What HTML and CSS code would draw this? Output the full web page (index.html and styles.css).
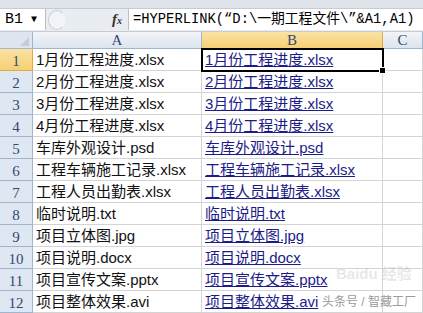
FILE: index.html
```html
<!DOCTYPE html>
<html lang="zh-CN">
<head>
    <meta charset="UTF-8">
    <title>HYPERLINK</title>
    <link rel="stylesheet" href="styles.css">
</head>
<body>

<div id="sheet">
    <div class="ribbon-edge"></div>

    <div class="formula-bar">
        <div class="name-box">B1<span class="arrow">&#9660;</span></div>
        <div class="bar-tools">
            <span class="round-btn"></span>
            <span class="fx"><i>f</i><small>x</small></span>
        </div>
        <div class="formula">=HYPERLINK(“D:\一期工程文件\”&amp;A1,A1)</div>
    </div>

    <div class="grid" id="grid">
        <div class="corner"><span class="tri"></span></div>
        <div class="col-head">A</div>
        <div class="col-head sel">B</div>
        <div class="col-head">C</div>
    </div>

    <div class="watermark">头条号 / 智藏工厂</div>
    <div class="paw">Bai<b>du</b> 经验</div>
</div>

<script>
    const files = [
        "1月份工程进度.xlsx",
        "2月份工程进度.xlsx",
        "3月份工程进度.xlsx",
        "4月份工程进度.xlsx",
        "车库外观设计.psd",
        "工程车辆施工记录.xlsx",
        "工程人员出勤表.xlsx",
        "临时说明.txt",
        "项目立体图.jpg",
        "项目说明.docx",
        "项目宣传文案.pptx",
        "项目整体效果.avi"
    ];

    const grid = document.getElementById('grid');
    files.forEach((name, i) => {
        const row = i + 1;
        grid.insertAdjacentHTML('beforeend',
            '<div class="row-head' + (row === 1 ? ' sel' : '') + '">' + row + '</div>' +
            '<div class="cell">' + name + '</div>' +
            '<div class="cell' + (row === 1 ? ' active' : '') + '"><span class="link">' + name + '</span></div>' +
            '<div class="cell"></div>');
    });
</script>
</body>
</html>
```

FILE: styles.css
```css
body {
    margin: 0;
    background: #fff;
    font-family: "Liberation Sans", "Noto Sans CJK SC", sans-serif;
}
#sheet {
    position: relative;
    width: 423px;
    height: 313px;
    overflow: hidden;
}
.ribbon-edge {
    height: 8px;
    background: #dfe4eb;
    border-bottom: 1px solid #c5ccd6;
}
.formula-bar {
    display: flex;
    height: 21px;
    background: #e9edf2;
    border-bottom: 1px solid #c5ccd6;
    padding-bottom: 1px;
}
.name-box {
    width: 40px;
    background: #fff;
    border-right: 1px solid #b8c0cc;
    font-family: "Liberation Mono", monospace;
    font-size: 15px;
    line-height: 21px;
    padding-left: 5px;
    position: relative;
}
.arrow {
    position: absolute;
    left: 31px;
    top: 0;
    font-size: 10px;
}
.bar-tools {
    width: 74px;
    display: flex;
    align-items: center;
    justify-content: space-between;
    padding: 0 6px 0 2px;
}
.round-btn {
    width: 16px;
    height: 18px;
    border-radius: 50%;
    border: 1px solid #c9cfd8;
    border-right-color: transparent;
    background: #f1f3f6;
}
.fx {
    font-family: "Liberation Serif", serif;
    font-size: 15px;
    font-weight: bold;
    color: #333;
}
.fx small {
    font-size: 10px;
    font-style: italic;
}
.formula {
    flex: 1;
    background: #fff;
    border-left: 1px solid #b8c0cc;
    font-family: "Liberation Mono", "Noto Sans CJK SC", monospace;
    font-size: 13.8px;
    line-height: 21px;
    padding-left: 4px;
    white-space: nowrap;
}
.grid {
    display: grid;
    grid-template-columns: 33px 169px 181px 1fr;
    grid-template-rows: 17px;
    grid-auto-rows: 22px;
}
.corner {
    background: #dfe6f0;
    border-right: 1px solid #9eb6ce;
    border-bottom: 1px solid #9eb6ce;
    position: relative;
}
.tri {
    position: absolute;
    right: 3px;
    bottom: 2px;
    border-left: 9px solid transparent;
    border-bottom: 9px solid #c3ccd8;
}
.col-head {
    background: linear-gradient(#f2f5f9, #dde4ee);
    border-right: 1px solid #9eb6ce;
    border-bottom: 1px solid #9eb6ce;
    font-family: "Liberation Serif", serif;
    font-size: 15px;
    color: #2f4a74;
    text-align: center;
    line-height: 17px;
}
.col-head.sel,
.row-head.sel {
    background: linear-gradient(#fbe3a3, #f5cf75);
    border-color: #e2a940;
}
.row-head {
    background: #dfe7f2;
    border-right: 1px solid #9eb6ce;
    border-bottom: 1px solid #9eb6ce;
    font-family: "Liberation Serif", serif;
    font-size: 15px;
    color: #2f4a74;
    text-align: center;
    line-height: 24px;
}
.cell {
    border-right: 1px solid #d4d4d4;
    border-bottom: 1px solid #d4d4d4;
    font-size: 15px;
    line-height: 22px;
    padding-left: 3px;
    white-space: nowrap;
    color: #111;
}
.link {
    color: #1c1c88;
    text-decoration: underline;
}
.cell.active {
    position: relative;
    outline: 2px solid #000;
    outline-offset: -1px;
    z-index: 1;
}
.cell.active::after {
    content: "";
    position: absolute;
    right: -4px;
    bottom: -4px;
    width: 5px;
    height: 5px;
    background: #000;
    border: 1px solid #fff;
}
.watermark {
    position: absolute;
    left: 322px;
    top: 292px;
    font-size: 12px;
    color: #9a9a9a;
    z-index: 2;
}
.paw {
    position: absolute;
    left: 336px;
    top: 262px;
    font-size: 15px;
    color: rgba(160, 160, 160, 0.25);
    font-weight: bold;
    z-index: 2;
}
```
